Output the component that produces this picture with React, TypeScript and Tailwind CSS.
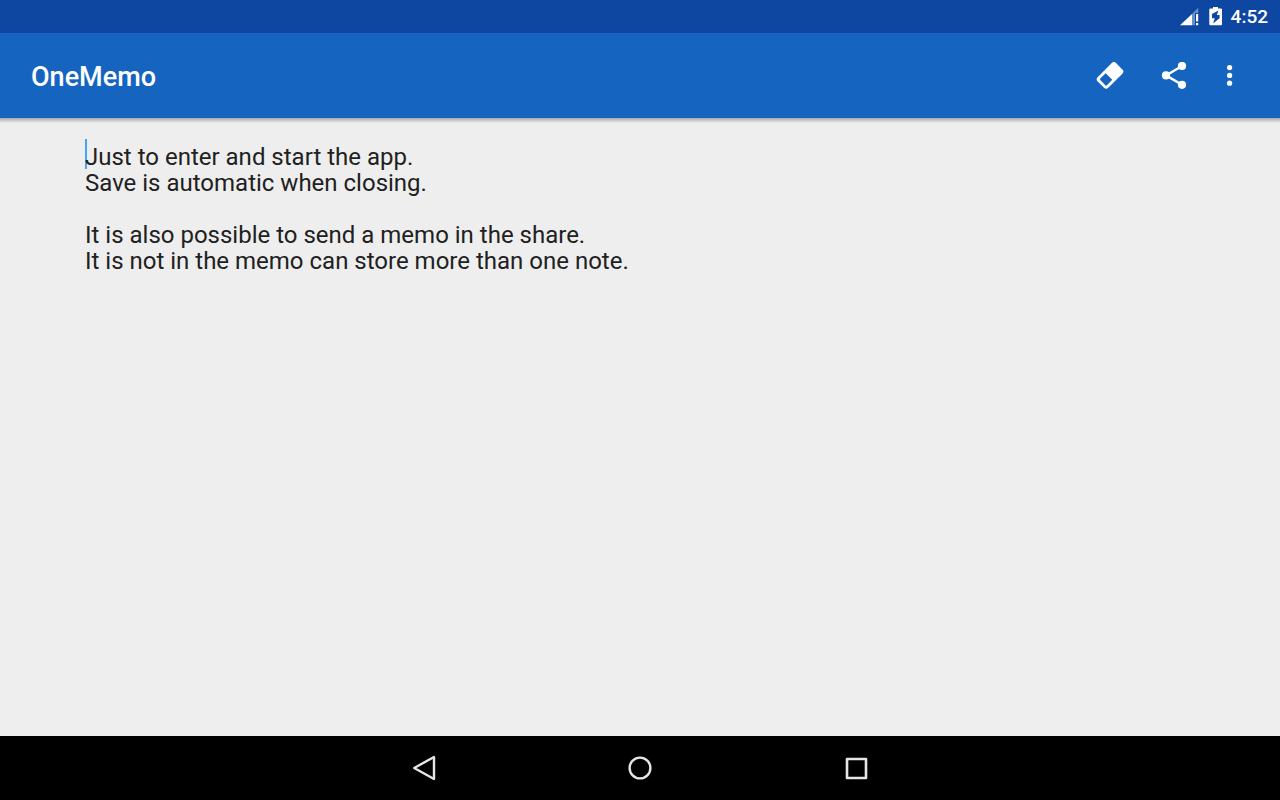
import { useState } from "react";

const INITIAL_MEMO = `Just to enter and start the app.
Save is automatic when closing.

It is also possible to send a memo in the share.
It is not in the memo can store more than one note.`;

function StatusBar() {
  return (
    <div className="flex h-[33px] items-center justify-end bg-[#0d47a1] pr-3 text-white">
      <svg width="21" height="20" viewBox="0 0 21 20" aria-label="Signal" role="img">
        <path d="M1 18.3 13 7V18.3Z" fill="#fff" />
        <path d="M13 7 19.2 0.8V6H16V18.3H13Z" fill="#fff" opacity="0.4" />
        <path d="M17 7H19.2V14.5H17ZM17 16H19.2V18.3H17Z" fill="#fff" />
      </svg>
      <svg className="ml-2" width="15" height="20" viewBox="0 0 15 20" aria-label="Battery charging" role="img">
        <path
          fillRule="evenodd"
          d="M5 -0.5H10V1.5H13Q14 1.5 14 2.5V17.3Q14 18.3 13 18.3H2.3Q1.3 18.3 1.3 17.3V2.5Q1.3 1.5 2.3 1.5H5ZM10.5 3.5 4 7V11.2H6.8L5 16.4 11.6 11.2V8H8.8Z"
          fill="#fff"
        />
      </svg>
      <span className="ml-2 pt-px text-[19px] leading-6 font-medium">4:52</span>
    </div>
  );
}

function Toolbar({ onClear }: { onClear: () => void }) {
  return (
    <header className="relative flex h-[85px] items-center bg-[#1565c0] pr-[27px] pl-[31px] text-white">
      <h1 className="grow pt-0.5 text-[27px] leading-8 font-medium">OneMemo</h1>
      <button type="button" aria-label="Erase" onClick={onClear} className="flex h-16 w-16 items-center justify-center">
        <svg width="28" height="28" viewBox="0 0.6 28 28">
          <g transform="rotate(-45 14 14)">
            <path
              fillRule="evenodd"
              d="M4 6.5H24Q27 6.5 27 9.5V18.5Q27 21.5 24 21.5H4Q1 21.5 1 18.5V9.5Q1 6.5 4 6.5ZM5.3 9.3Q3.8 9.3 3.8 10.8V17.2Q3.8 18.7 5.3 18.7H12.5V9.3Z"
              fill="#fff"
            />
          </g>
        </svg>
      </button>
      <button type="button" aria-label="Share" className="flex h-16 w-16 items-center justify-center">
        <svg width="28" height="28" viewBox="0 0.6 28 28">
          <path d="M22 4.6 6 14 22 23.4" fill="none" stroke="#fff" strokeWidth="2.4" />
          <circle cx="22" cy="4.6" r="4.1" fill="#fff" />
          <circle cx="6" cy="14" r="4.1" fill="#fff" />
          <circle cx="22" cy="23.4" r="4.1" fill="#fff" />
        </svg>
      </button>
      <button type="button" aria-label="More options" className="flex h-16 w-[47px] items-center justify-center">
        <svg width="28" height="28" viewBox="0.4 0.6 28 28" fill="#fff">
          <circle cx="14" cy="6.2" r="2.6" />
          <circle cx="14" cy="14" r="2.6" />
          <circle cx="14" cy="21.8" r="2.6" />
        </svg>
      </button>
      <div className="absolute inset-x-0 top-full h-[5px] bg-linear-to-b from-[#aaaaaa] to-[#eeeeee]" />
    </header>
  );
}

function NavBar() {
  return (
    <nav className="flex h-16 justify-center bg-black text-[#e6e6e6]">
      <button type="button" aria-label="Back" className="flex w-[216px] items-center justify-center">
        <svg width="28" height="28" viewBox="0 0 28 28" fill="none" stroke="currentColor" strokeWidth="2.4" strokeLinejoin="round">
          <path d="M4.2 14 24 3V25Z" />
        </svg>
      </button>
      <button type="button" aria-label="Home" className="flex w-[216px] items-center justify-center">
        <svg width="28" height="28" viewBox="0 0 28 28" fill="none" stroke="currentColor" strokeWidth="2.4">
          <circle cx="14" cy="14" r="10.4" />
        </svg>
      </button>
      <button type="button" aria-label="Recent apps" className="flex w-[216px] items-center justify-center">
        <svg width="28" height="28" viewBox="0 0 28 28" fill="none" stroke="currentColor" strokeWidth="2.6" strokeLinejoin="round">
          <rect x="5" y="5" width="19" height="19" />
        </svg>
      </button>
    </nav>
  );
}

export default function App() {
  const [memo, setMemo] = useState(INITIAL_MEMO);

  return (
    <div className="flex min-h-screen flex-col bg-[#eeeeee] font-['Roboto',sans-serif]">
      <StatusBar />
      <Toolbar onClear={() => setMemo("")} />
      <main className="relative flex grow px-[85px] pt-[26px]">
        <span className="absolute top-[21px] left-[85px] h-[30px] w-0.5 bg-[#42a5f5]" />
        <textarea
          aria-label="Memo"
          value={memo}
          onChange={(e) => setMemo(e.target.value)}
          className="relative grow resize-none bg-transparent text-[24px] leading-[26px] text-[#212121] caret-[#42a5f5] outline-none"
        />
      </main>
      <NavBar />
    </div>
  );
}
